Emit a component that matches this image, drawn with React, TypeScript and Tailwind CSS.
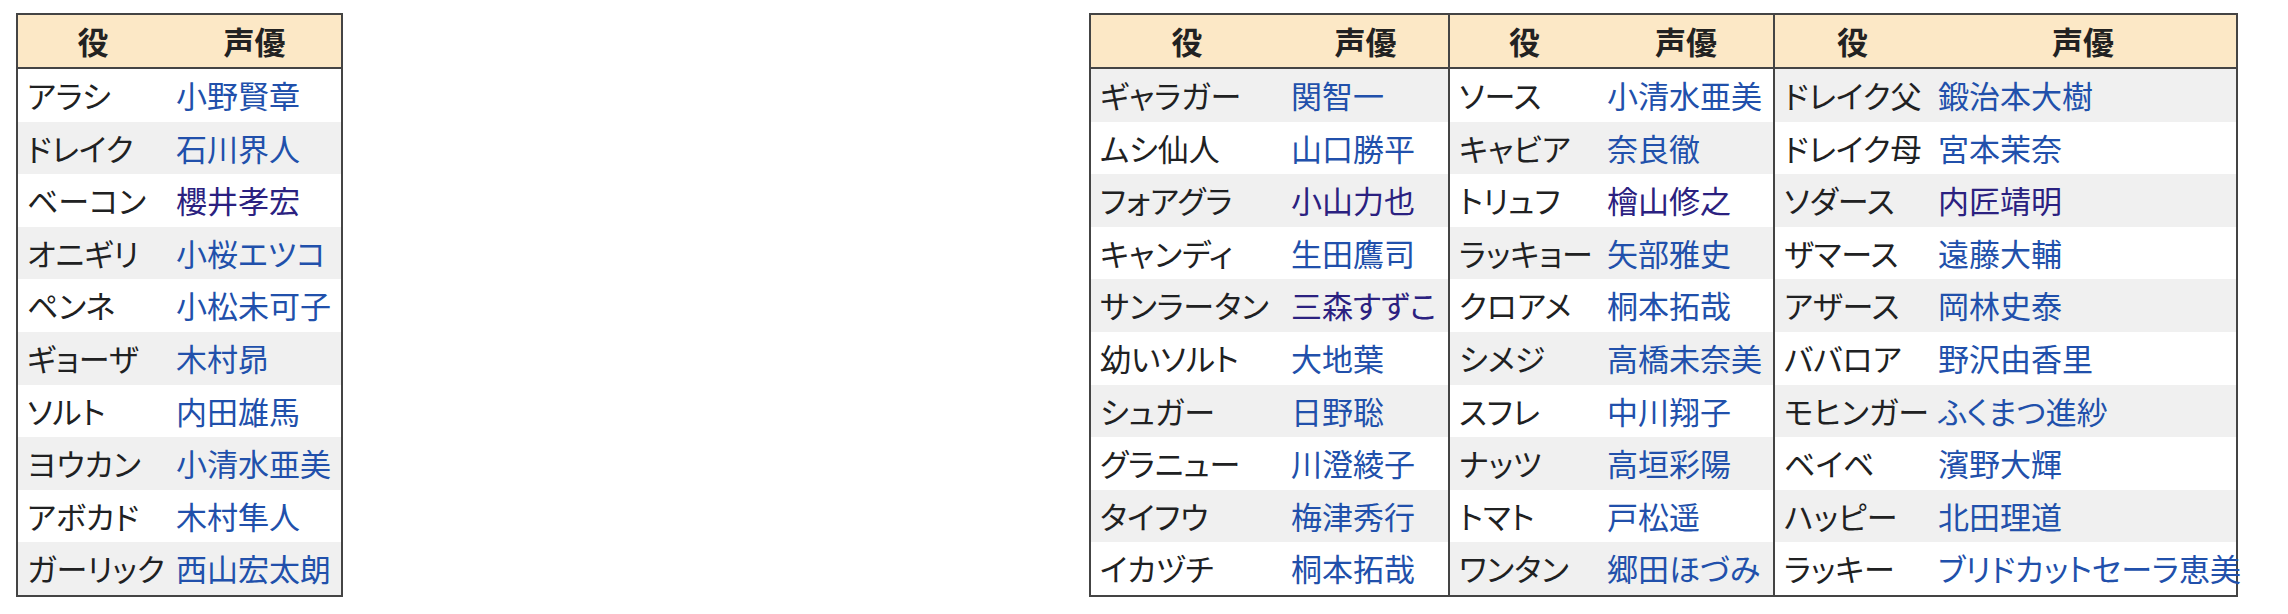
import React from 'react';

type Row = { role: string; actor: string; visited?: boolean };

const leftRows: Row[] = [
  { role: 'アラシ', actor: '小野賢章' },
  { role: 'ドレイク', actor: '石川界人' },
  { role: 'ベーコン', actor: '櫻井孝宏', visited: true },
  { role: 'オニギリ', actor: '小桜エツコ' },
  { role: 'ペンネ', actor: '小松未可子' },
  { role: 'ギョーザ', actor: '木村昴' },
  { role: 'ソルト', actor: '内田雄馬' },
  { role: 'ヨウカン', actor: '小清水亜美' },
  { role: 'アボカド', actor: '木村隼人' },
  { role: 'ガーリック', actor: '西山宏太朗' },
];

const group1: Row[] = [
  { role: 'ギャラガー', actor: '関智一' },
  { role: 'ムシ仙人', actor: '山口勝平' },
  { role: 'フォアグラ', actor: '小山力也', visited: true },
  { role: 'キャンディ', actor: '生田鷹司' },
  { role: 'サンラータン', actor: '三森すずこ', visited: true },
  { role: '幼いソルト', actor: '大地葉' },
  { role: 'シュガー', actor: '日野聡' },
  { role: 'グラニュー', actor: '川澄綾子' },
  { role: 'タイフウ', actor: '梅津秀行' },
  { role: 'イカヅチ', actor: '桐本拓哉' },
];

const group2: Row[] = [
  { role: 'ソース', actor: '小清水亜美' },
  { role: 'キャビア', actor: '奈良徹' },
  { role: 'トリュフ', actor: '檜山修之', visited: true },
  { role: 'ラッキョー', actor: '矢部雅史' },
  { role: 'クロアメ', actor: '桐本拓哉' },
  { role: 'シメジ', actor: '高橋未奈美' },
  { role: 'スフレ', actor: '中川翔子' },
  { role: 'ナッツ', actor: '高垣彩陽' },
  { role: 'トマト', actor: '戸松遥' },
  { role: 'ワンタン', actor: '郷田ほづみ' },
];

const group3: Row[] = [
  { role: 'ドレイク父', actor: '鍛治本大樹' },
  { role: 'ドレイク母', actor: '宮本茉奈' },
  { role: 'ソダース', actor: '内匠靖明', visited: true },
  { role: 'ザマース', actor: '遠藤大輔' },
  { role: 'アザース', actor: '岡林史泰' },
  { role: 'ババロア', actor: '野沢由香里' },
  { role: 'モヒンガー', actor: 'ふくまつ進紗' },
  { role: 'ベイベ', actor: '濱野大輝' },
  { role: 'ハッピー', actor: '北田理道' },
  { role: 'ラッキー', actor: 'ブリドカットセーラ恵美' },
];

interface GroupProps {
  rows: Row[];
  roleWidth: string;
  actorWidth: string;
  oddGray: boolean;
  divider?: boolean;
}

// one role/actor pair of columns with its own header
const CastGroup: React.FC<GroupProps> = ({ rows, roleWidth, actorWidth, oddGray, divider }) => {
  return (
    <div className={divider ? 'border-l-2 border-[#444]' : ''}>
      <div className="flex h-[54px] border-b-2 border-[#444] bg-[#fce8c6] font-bold text-[#222]">
        <div className={`${roleWidth} flex items-center justify-center`}>役</div>
        <div className={`${actorWidth} flex items-center justify-center`}>声優</div>
      </div>
      {rows.map((r, i) => {
        const gray = oddGray ? i % 2 === 0 : i % 2 === 1;
        return (
          <div key={r.role} className={`flex h-[52.6px] ${gray ? 'bg-[#f0f0f0]' : 'bg-white'}`}>
            <div className={`${roleWidth} flex items-center pl-[9px] text-[#202122] whitespace-nowrap`}>{r.role}</div>
            <div
              className={`${actorWidth} flex items-center pl-[8px] whitespace-nowrap ${r.visited ? 'text-[#2b2180]' : 'text-[#2150ab]'}`}
            >
              {r.actor}
            </div>
          </div>
        );
      })}
    </div>
  );
};

export default function App() {
  return (
    <div className="min-h-[614px] w-[2288px] bg-white pl-[16px] pt-[13px] font-['Noto_Sans_CJK_JP','Noto_Sans',sans-serif] text-[31px] [font-feature-settings:'palt']">
      <div className="flex items-start">
        <div className="flex border-2 border-[#444]">
          <CastGroup rows={leftRows} roleWidth="w-[150px]" actorWidth="w-[173px]" oddGray={false} />
        </div>
        <div className="ml-[746px] flex border-2 border-[#444]">
          <CastGroup rows={group1} roleWidth="w-[192px]" actorWidth="w-[165px]" oddGray={true} />
          <CastGroup rows={group2} roleWidth="w-[149px]" actorWidth="w-[174px]" oddGray={false} divider />
          <CastGroup rows={group3} roleWidth="w-[155px]" actorWidth="w-[306px]" oddGray={true} divider />
        </div>
      </div>
    </div>
  );
}
